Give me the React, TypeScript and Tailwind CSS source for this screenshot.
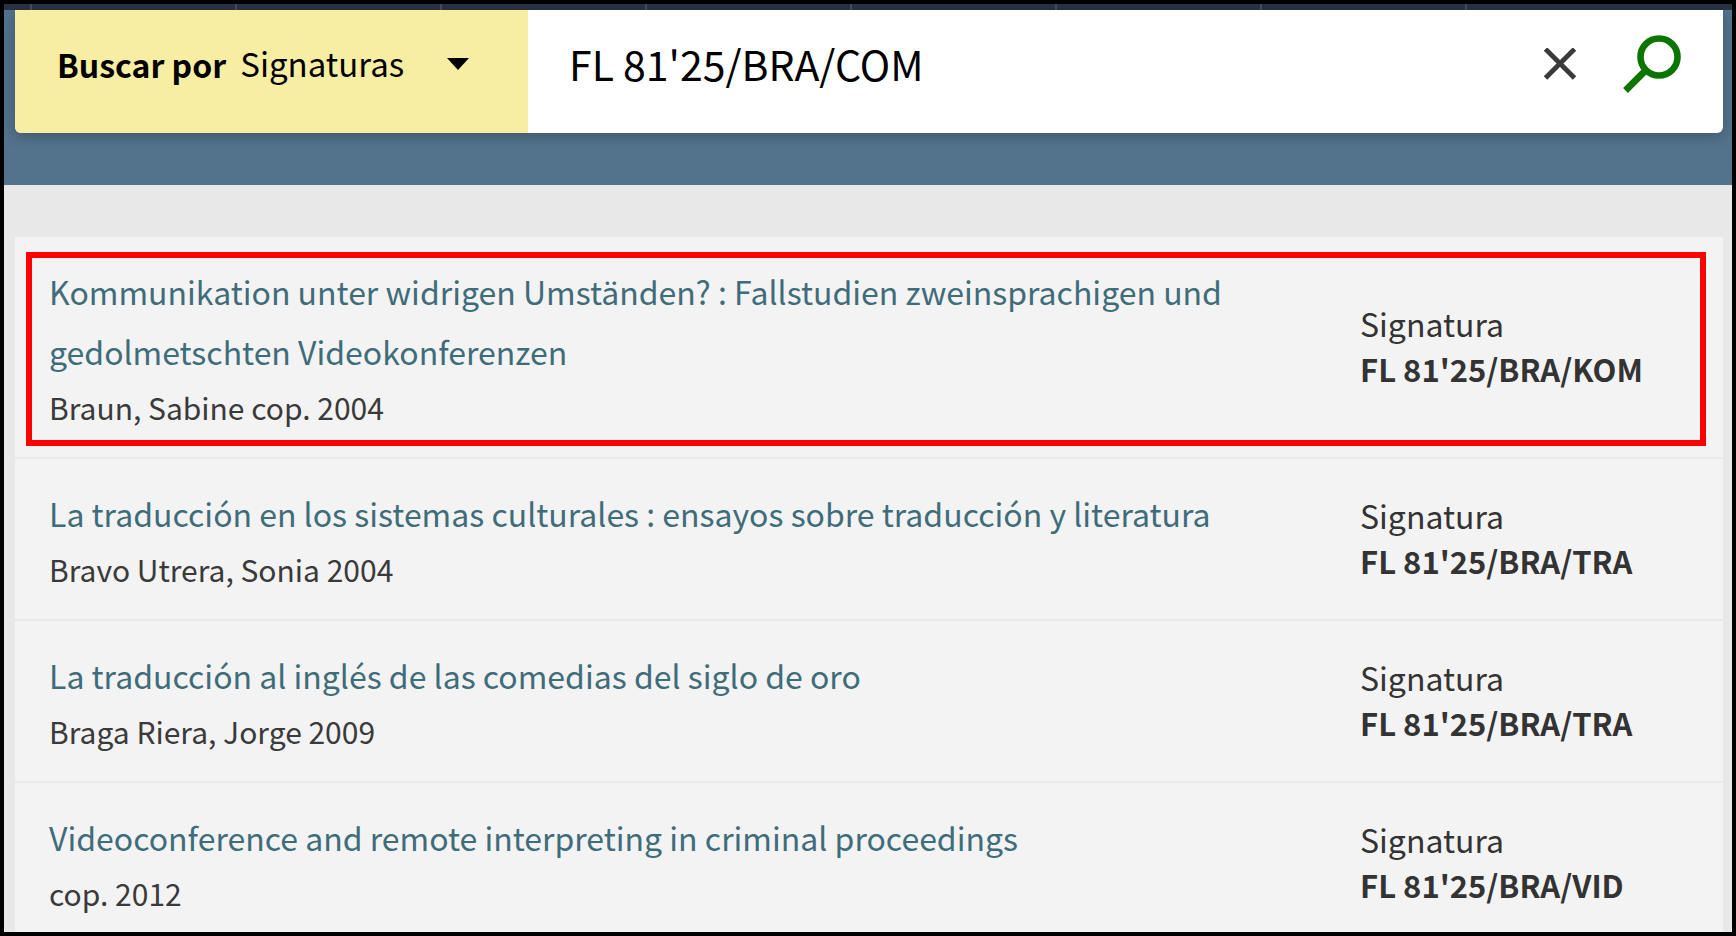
import { useState } from 'react';

const records = [
  {
    title: 'Kommunikation unter widrigen Umständen? : Fallstudien zweinsprachigen und gedolmetschten Videokonferenzen',
    author: 'Braun, Sabine cop. 2004',
    callNumber: "FL 81'25/BRA/KOM",
    highlighted: true,
  },
  {
    title: 'La traducción en los sistemas culturales : ensayos sobre traducción y literatura',
    author: 'Bravo Utrera, Sonia 2004',
    callNumber: "FL 81'25/BRA/TRA",
  },
  {
    title: 'La traducción al inglés de las comedias del siglo de oro',
    author: 'Braga Riera, Jorge 2009',
    callNumber: "FL 81'25/BRA/TRA",
  },
  {
    title: 'Videoconference and remote interpreting in criminal proceedings',
    author: 'cop. 2012',
    callNumber: "FL 81'25/BRA/VID",
  },
];

const menuSlots = [0, 1, 2, 3, 4, 5, 6, 7];

function SearchBar() {
  const [query, setQuery] = useState("FL 81'25/BRA/COM");

  return (
    <form
      onSubmit={(e) => e.preventDefault()}
      className="flex h-[123px] overflow-hidden rounded-b-md bg-white shadow-[0_3px_14px_rgba(0,0,0,0.25)]"
    >
      <div className="flex w-[513px] shrink-0 items-center bg-[#f8eea3] pb-4 pl-[42px] text-black">
        <label htmlFor="index" className="shrink-0 text-[32px] font-bold">
          Buscar por
        </label>
        <div className="relative ml-3.5 flex items-center">
          <select id="index" className="w-[229px] appearance-none bg-transparent text-[33px] outline-none">
            <option>Signaturas</option>
          </select>
          <svg viewBox="0 0 22 12" className="pointer-events-none absolute right-0 h-3 w-[22px]">
            <path d="M0 0h22L11 12z" fill="#000" />
          </svg>
        </div>
      </div>
      <div className="flex min-w-0 flex-1 items-center pr-[42px] pb-4 pl-[41px]">
        <input
          type="text"
          aria-label="Buscar"
          value={query}
          onChange={(e) => setQuery(e.target.value)}
          className="min-w-0 flex-1 text-[41px] text-black outline-none"
        />
        <button type="button" aria-label="Borrar" onClick={() => setQuery('')}>
          <svg viewBox="0 0 32 32" className="h-8 w-8">
            <path d="M1.5 1l29 29M30.5 1l-29 29" stroke="#3a3a3a" strokeWidth="4.8" fill="none" />
          </svg>
        </button>
        <button type="submit" aria-label="Ejecutar búsqueda" className="ml-[47px]">
          <svg viewBox="0 0 58 58" className="h-[58px] w-[58px]" fill="none" stroke="#0b7500">
            <circle cx="36" cy="22" r="18.5" strokeWidth="6.6" />
            <path d="M21 37L2.5 55.5" strokeWidth="6.8" />
          </svg>
        </button>
      </div>
    </form>
  );
}

export default function App() {
  return (
    <div className="flex h-screen flex-col overflow-hidden border-4 border-black bg-[#e8e8e8] font-['Noto_Sans_CJK_SC',sans-serif]">
      <header className="shrink-0 bg-[#53728c] pb-[52px]">
        <nav className="flex h-1.5 overflow-hidden bg-[#283345] pl-[26px]">
          {menuSlots.map((slot) => (
            <div key={slot} className="w-[205px] shrink-0 border-l-2 border-[#414b5c]" />
          ))}
        </nav>
        <div className="pr-[9px] pl-[11px]">
          <SearchBar />
        </div>
      </header>

      <main className="pt-[52px] pr-[9px] pl-[11px]">
        <ul className="bg-[#f3f3f3]">
          {records.map((record) => (
            <li
              key={record.title}
              className="relative flex items-center border-b-2 border-[#e9e9e9] py-6 pl-[34px]"
            >
              <div className="min-w-0 flex-1 pr-24">
                <a href="#" className="block text-[32px] leading-[60px] text-[#3f6c7a]">
                  {record.title}
                </a>
                <p className="text-[30px] leading-[52px] text-[#3a3a3a]">{record.author}</p>
              </div>
              <div className="w-[363px] shrink-0 pb-[3px] text-[#333333]">
                <div className="text-[32px] leading-[45px]">Signatura</div>
                <div className="text-[31px] leading-[45px] font-bold">{record.callNumber}</div>
              </div>
              {record.highlighted && (
                <div className="pointer-events-none absolute top-[15px] right-[17px] bottom-[11px] left-[11px] border-6 border-[#ff0000]" />
              )}
            </li>
          ))}
        </ul>
      </main>
    </div>
  );
}
